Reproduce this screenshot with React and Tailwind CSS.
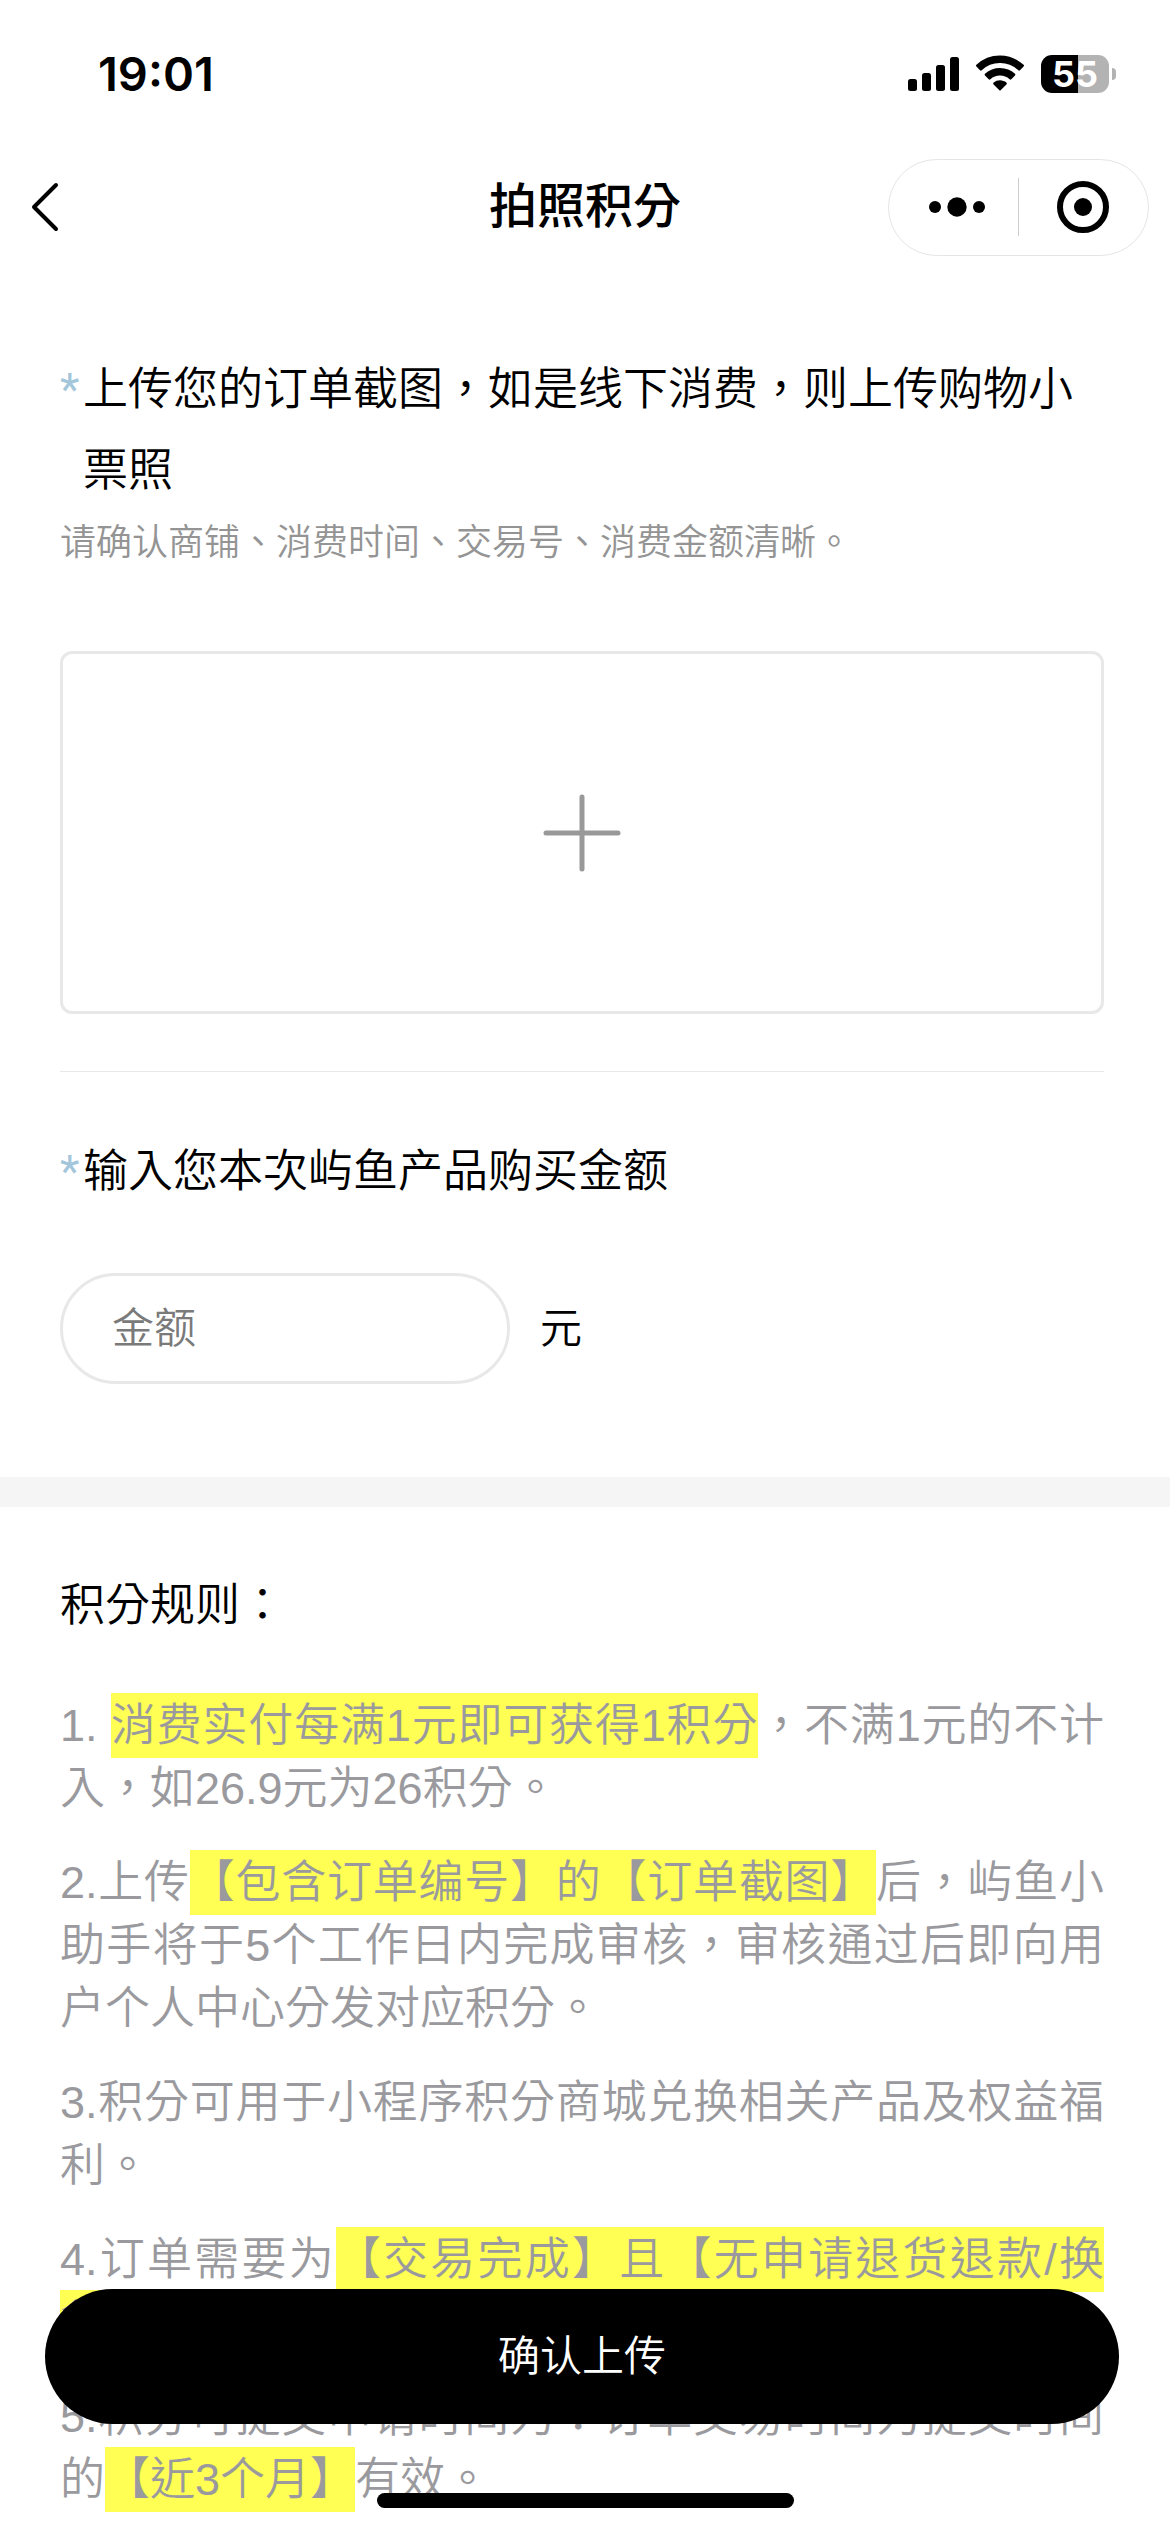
import React, { useState } from 'react';

const StatusBar = () => (
  <div className="flex h-[148px] items-center justify-between pr-[54px] pl-[98px]">
    <span className="font-[Inter] text-[47px] leading-[56px] font-semibold">19:01</span>
    <div className="flex items-center gap-[17px]">
      <svg className="h-[38px] w-[51px]" viewBox="0 0 51 38" aria-hidden="true">
        <rect x="0" y="24" width="9" height="12" rx="2.5" />
        <rect x="14" y="18" width="9" height="18" rx="2.5" />
        <rect x="28" y="10" width="9" height="26" rx="2.5" />
        <rect x="42" y="2" width="9" height="34" rx="2.5" />
      </svg>
      <svg className="h-[38px] w-[48px]" viewBox="0 0 48 38" aria-hidden="true">
        <path d="M24 .5C33 .5 41.5 4 47.6 9.8a1.2 1.2 0 0 1 0 1.7l-3.6 3.7a1.2 1.2 0 0 1-1.7 0A26.5 26.5 0 0 0 24 8 26.5 26.5 0 0 0 5.7 15.2a1.2 1.2 0 0 1-1.7 0L.4 11.5a1.2 1.2 0 0 1 0-1.7A34.3 34.3 0 0 1 24 .5z" />
        <path d="M24 13c5.8 0 11 2.2 15 5.8a1.2 1.2 0 0 1 0 1.7l-3.7 3.7a1.2 1.2 0 0 1-1.7 0A14.3 14.3 0 0 0 24 20.5a14.3 14.3 0 0 0-9.6 3.7 1.2 1.2 0 0 1-1.7 0L9 20.5a1.2 1.2 0 0 1 0-1.7A22.3 22.3 0 0 1 24 13z" />
        <path d="M24 25.3c2.5 0 4.7.9 6.4 2.3a1.2 1.2 0 0 1 0 1.8l-5.5 5.7a1.2 1.2 0 0 1-1.8 0l-5.5-5.7a1.2 1.2 0 0 1 0-1.8A10 10 0 0 1 24 25.3z" />
      </svg>
      <div className="flex items-center gap-[3px]">
        <div className="flex h-[38px] w-[68px] items-center justify-center rounded-[11px] bg-linear-to-r from-black from-54% to-[#b3b3b3] to-54% font-[Inter] text-[36px] leading-[38px] font-bold text-white">
          55
        </div>
        <div className="h-[12px] w-[4px] rounded-r-full bg-[#b3b3b3]" />
      </div>
    </div>
  </div>
);

const NavBar = () => (
  <header className="grid h-[118px] grid-cols-[1fr_auto_1fr] items-center px-[21px]">
    <button type="button" aria-label="返回" className="justify-self-start pl-[9px]">
      <svg className="h-[50px] w-[30px]" viewBox="0 0 30 50" fill="none" stroke="black" strokeWidth="4" strokeLinecap="round" strokeLinejoin="round">
        <path d="M26 3L4 25l22 22" />
      </svg>
    </button>
    <h1 className="text-[48px] leading-[64px] font-medium">拍照积分</h1>
    <div className="grid h-[97px] w-[261px] grid-cols-2 items-center justify-self-end rounded-full border border-[#e5e5e5]">
      <button type="button" aria-label="更多" className="flex h-[58px] items-center justify-center border-r border-[#cccccc] pl-[8px]">
        <svg className="h-[20px] w-[56px]" viewBox="0 0 56 20">
          <circle cx="6" cy="10" r="6" />
          <circle cx="28" cy="10" r="9.7" />
          <circle cx="50" cy="10" r="6" />
        </svg>
      </button>
      <button type="button" aria-label="关闭" className="flex h-[58px] items-center justify-center">
        <svg className="h-[52px] w-[52px]" viewBox="0 0 52 52">
          <circle cx="26" cy="26" r="23" fill="none" stroke="black" strokeWidth="6" />
          <circle cx="26" cy="26" r="9" />
        </svg>
      </button>
    </div>
  </header>
);

const Star = () => <span className="w-[23px] font-[Roboto] font-normal text-[#a3c6da]">*</span>;

const Mark = ({ children }) => (
  <mark className="bg-[#ffff54] py-[7px] text-inherit">{children}</mark>
);

const App = () => {
  const [amount, setAmount] = useState('');
  const [fileName, setFileName] = useState('');

  return (
    <div className="relative h-screen overflow-hidden bg-white font-['Liberation_Sans','Noto_Sans_CJK_TC',sans-serif] font-[350] text-black">
      <StatusBar />
      <NavBar />

      <main>
        <section className="pt-[83px] pr-[66px] pb-[93px] pl-[60px]">
          <h2 className="flex text-[45px] leading-[81px] font-[350]">
            <Star />
            <span className="flex-1">上传您的订单截图，如是线下消费，则上传购物小票照</span>
          </h2>
          <p className="text-[36px] leading-[64px] text-[#949494]">请确认商铺、消费时间、交易号、消费金额清晰。</p>

          <label className="mt-[76px] flex h-[363px] cursor-pointer items-center justify-center rounded-[12px] border-3 border-[#e8e8e8]" title={fileName}>
            <input
              type="file"
              accept="image/*"
              aria-label="上传图片"
              className="sr-only"
              onChange={(e) => setFileName(e.target.files[0]?.name || '')}
            />
            <svg className="h-[78px] w-[78px]" viewBox="0 0 78 78" stroke="#999999" strokeWidth="5" strokeLinecap="round">
              <path d="M39 3v72M3 39h72" />
            </svg>
          </label>

          <hr className="mt-[57px] border-[#e8e8e8]" />

          <label htmlFor="amount" className="mt-[59px] flex text-[45px] leading-[81px]">
            <Star />
            <span>输入您本次屿鱼产品购买金额</span>
          </label>
          <div className="mt-[61px] flex items-center gap-[30px] text-[42px] leading-[60px]">
            <input
              id="amount"
              type="text"
              inputMode="decimal"
              placeholder="金额"
              value={amount}
              onChange={(e) => setAmount(e.target.value)}
              className="h-[111px] w-[450px] rounded-full border-3 border-[#e8e8e8] px-[49px] placeholder:text-[#7a7a7a]"
            />
            <span>元</span>
          </div>
        </section>

        <div className="h-[30px] bg-[#f5f5f5]" />

        <section className="pt-[58px] pr-[66px] pl-[60px]">
          <h2 className="text-[45px] leading-[81px] font-[350]">积分规则：</h2>
          <div className="mt-[48px] flex flex-col gap-[31px] text-justify text-[45px] leading-[63px] text-[#9a9a9e]">
            <p>
              1. <Mark>消费实付每满1元即可获得1积分</Mark>，不满1元的不计入，如26.9元为26积分。
            </p>
            <p>
              2.上传<Mark>【包含订单编号】的【订单截图】</Mark>后，屿鱼小助手将于5个工作日内完成审核，审核通过后即向用户个人中心分发对应积分。
            </p>
            <p>3.积分可用于小程序积分商城兑换相关产品及权益福利。</p>
            <p>
              4.订单需要为<Mark>【交易完成】且【无申请退货退款/换货】</Mark>
            </p>
            <p>
              5.积分可提交申请时间为：订单交易时间为提交时间的<Mark>【近3个月】</Mark>有效。
            </p>
          </div>
        </section>
      </main>

      <div className="absolute inset-x-0 bottom-[108px] pr-[51px] pl-[45px]">
        <button type="button" className="h-[135px] w-full rounded-full bg-black text-[42px] text-white">
          确认上传
        </button>
      </div>
      <div className="absolute inset-x-0 bottom-[24px] flex justify-center">
        <div className="h-[15px] w-[417px] rounded-full bg-black" />
      </div>
    </div>
  );
};

export default App;
